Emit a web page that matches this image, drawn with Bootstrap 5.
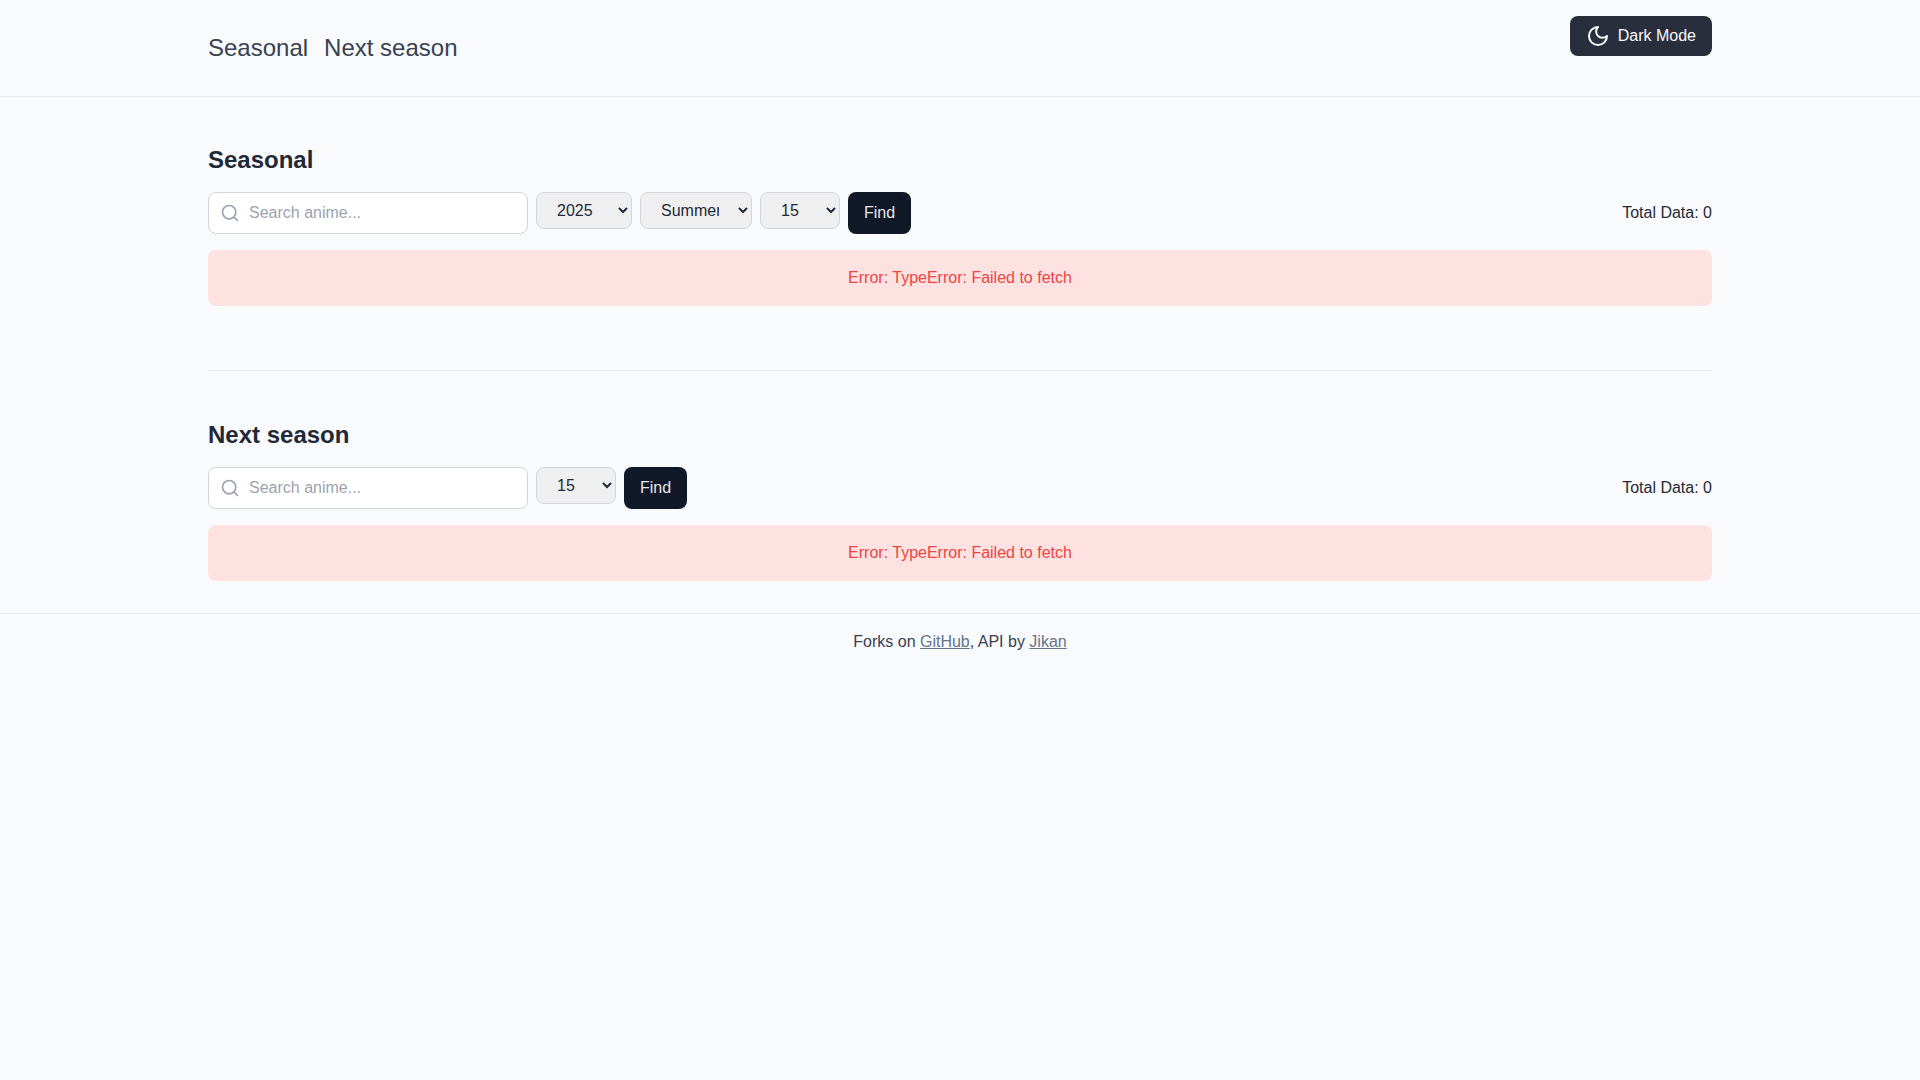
<!DOCTYPE html>
<html lang="en">
<head>
<meta charset="utf-8">
<meta name="viewport" content="width=device-width, initial-scale=1">
<title>Seasonal anime</title>
<link href="https://cdn.jsdelivr.net/npm/bootstrap@5.3.0/dist/css/bootstrap.min.css" rel="stylesheet">
<style>
  body { font-family: "Liberation Sans", Arial, sans-serif; font-size: 16px; line-height: 24px; color: #1f2937; background: #f9fafc; }
  .page-width { max-width: 1536px; }
  .line-top { border-top: 1px solid #e5e7eb; }
  .site-header { box-shadow: 0 1px 0 #e5e7eb; }
  .site-link { font-size: 24px; line-height: 32px; color: #374151; text-decoration: none; }
  .theme-btn, .find-btn { border: 0; border-radius: 8px; padding: 8px 16px; }
  .theme-btn { background: #282e3c; color: #f9fafb; }
  .find-btn { background: #111827; color: #e5e7eb; }
  .section-title { font-size: 24px; line-height: 32px; font-weight: 700; }
  .search-box { width: 320px; }
  .search-input { border: 1px solid #d1d5db; border-radius: 8px; padding: 8px 16px 8px 40px; line-height: 24px; color: #1f2937; background: #fff; }
  .search-input::placeholder { color: #9ca3af; opacity: 1; }
  .search-icon { left: 12px; color: #9ca3af; pointer-events: none; }
  .pick { border: 1px solid #d1d5db; border-radius: 8px; padding: 8px 16px; color: #1f2937; background-color: #efefef; }
  .pick-year { width: 96px; }
  .pick-season { width: 112px; }
  .pick-limit { width: 80px; }
  .error-box { background: #fee2e2; color: #ef4444; border-radius: 8px; }
  .section-gap { margin: 64px 0 48px; }
  .site-footer { color: #374151; }
  .site-footer a { color: #64748b; }
</style>
</head>
<body>
<header class="site-header">
  <div class="page-width container-fluid px-3 d-flex justify-content-between align-items-start">
    <nav class="d-flex gap-3 my-3 py-3" aria-label="Main">
      <a class="site-link" href="#seasonal">Seasonal</a>
      <a class="site-link" href="#next">Next season</a>
    </nav>
    <button type="button" class="theme-btn d-flex align-items-center gap-2 mt-3">
      <svg width="24" height="24" viewBox="0 0 24 24" fill="none" stroke="currentColor" stroke-width="2" stroke-linecap="round" stroke-linejoin="round" aria-hidden="true"><path d="M12 3a6 6 0 0 0 9 9 9 9 0 1 1-9-9Z"/></svg>
      Dark Mode
    </button>
  </div>
</header>

<main class="page-width container-fluid px-3 pt-5 pb-3 mb-3">
  <section id="seasonal">
    <h2 class="section-title mb-3">Seasonal</h2>
    <div class="d-flex justify-content-between align-items-center mb-3">
      <form class="d-flex align-items-start gap-2">
        <div class="search-box position-relative d-flex align-items-center">
          <svg class="search-icon position-absolute" width="20" height="20" viewBox="0 0 24 24" fill="none" stroke="currentColor" stroke-width="2" stroke-linecap="round" stroke-linejoin="round" aria-hidden="true"><circle cx="11" cy="11" r="8"/><path d="m21 21-4.3-4.3"/></svg>
          <input class="search-input w-100" type="text" placeholder="Search anime..." aria-label="Search seasonal anime">
        </div>
        <select class="pick pick-year" aria-label="Year"><option>2025</option><option>2024</option><option>2023</option></select>
        <select class="pick pick-season" aria-label="Season"><option>Summer</option><option>Fall</option><option>Winter</option><option>Spring</option></select>
        <select class="pick pick-limit" aria-label="Results per page"><option>15</option><option>20</option><option>25</option></select>
        <button type="button" class="find-btn align-self-stretch">Find</button>
      </form>
      <div>Total Data: 0</div>
    </div>
    <div class="error-box p-3 text-center" role="alert">Error: TypeError: Failed to fetch</div>
  </section>

  <div class="section-gap line-top"></div>

  <section id="next">
    <h2 class="section-title mb-3">Next season</h2>
    <div class="d-flex justify-content-between align-items-center mb-3">
      <form class="d-flex align-items-start gap-2">
        <div class="search-box position-relative d-flex align-items-center">
          <svg class="search-icon position-absolute" width="20" height="20" viewBox="0 0 24 24" fill="none" stroke="currentColor" stroke-width="2" stroke-linecap="round" stroke-linejoin="round" aria-hidden="true"><circle cx="11" cy="11" r="8"/><path d="m21 21-4.3-4.3"/></svg>
          <input class="search-input w-100" type="text" placeholder="Search anime..." aria-label="Search next season anime">
        </div>
        <select class="pick pick-limit" aria-label="Results per page"><option>15</option><option>20</option><option>25</option></select>
        <button type="button" class="find-btn align-self-stretch">Find</button>
      </form>
      <div>Total Data: 0</div>
    </div>
    <div class="error-box p-3 text-center" role="alert">Error: TypeError: Failed to fetch</div>
  </section>
</main>

<footer class="site-footer line-top p-3 text-center">
  Forks on <a href="#github">GitHub</a>, API by <a href="#jikan">Jikan</a>
</footer>
<script src="https://cdn.jsdelivr.net/npm/bootstrap@5.3.0/dist/js/bootstrap.bundle.min.js"></script>
</body>
</html>
